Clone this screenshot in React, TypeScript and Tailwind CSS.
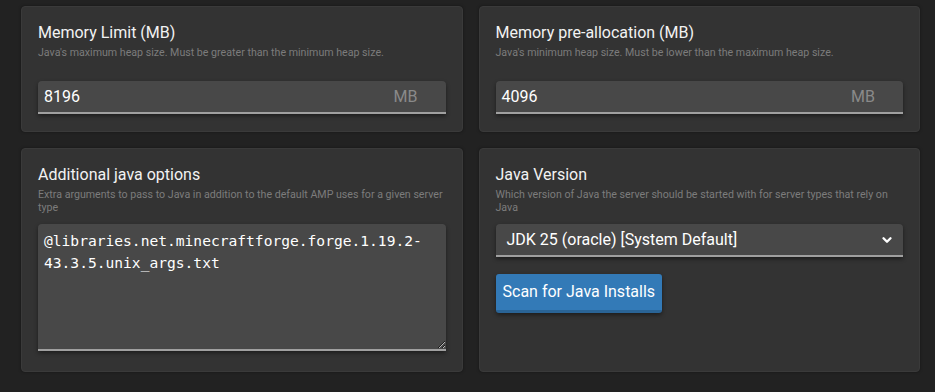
import { ChevronDown } from "lucide-react"

const Card = ({ title, desc, children }: { title: string; desc: string; children: React.ReactNode }) => {
  return (
    <div className="rounded bg-[#333333] border border-[#3a3a3a] px-4 pt-[15px] shadow-[0_0_3px_rgba(0,0,0,0.4)]">
      <h3 className="text-[16px] leading-[22px] text-[#f2f2f2] font-normal">{title}</h3>
      <p className="text-[10.65px] leading-[13px] text-[#7c7c7c] mt-[2px]">{desc}</p>
      {children}
    </div>
  )
}

export default function App() {
  return (
    <div className="w-[935px] h-[392px] bg-[#222222] pl-[21px] pr-[15px] pt-[6px] font-['Roboto',sans-serif] overflow-hidden">
      <div className="grid grid-cols-2 gap-x-4 gap-y-4">
        <Card title="Memory Limit (MB)" desc="Java's maximum heap size. Must be greater than the minimum heap size.">
          <div className="mt-[22px] mb-[17px] h-[33px] rounded-t bg-[#484848] border-b-2 border-[#a0a0a0] shadow-[0_2px_4px_rgba(0,0,0,0.45)] flex items-center justify-between pl-[6px] pr-[28px]">
            <span className="text-[16px] text-white">8196</span>
            <span className="text-[16px] text-[#8a8a8a]">MB</span>
          </div>
        </Card>
        <Card title="Memory pre-allocation (MB)" desc="Java's minimum heap size. Must be lower than the maximum heap size.">
          <div className="mt-[22px] mb-[17px] h-[33px] rounded-t bg-[#484848] border-b-2 border-[#a0a0a0] shadow-[0_2px_4px_rgba(0,0,0,0.45)] flex items-center justify-between pl-[6px] pr-[28px]">
            <span className="text-[16px] text-white">4096</span>
            <span className="text-[16px] text-[#8a8a8a]">MB</span>
          </div>
        </Card>
        <Card title="Additional java options" desc="Extra arguments to pass to Java in addition to the default AMP uses for a given server type">
          <textarea
            readOnly
            defaultValue="@libraries.net.minecraftforge.forge.1.19.2-43.3.5.unix_args.txt"
            className="mt-[10px] mb-[20px] block w-full h-[127px] rounded-t bg-[#484848] border-0 border-b-2 border-[#a0a0a0] shadow-[0_2px_4px_rgba(0,0,0,0.45)] px-[6px] pt-[6px] text-[14.6px] leading-[22px] text-white font-['DejaVu_Sans_Mono',monospace] outline-none resize-y"
          />
        </Card>
        <Card title="Java Version" desc="Which version of Java the server should be started with for server types that rely on Java">
          <div className="mt-[10px] h-[33px] rounded-t bg-[#484848] border-b-2 border-[#a0a0a0] shadow-[0_2px_4px_rgba(0,0,0,0.45)] flex items-center justify-between pl-[11px] pr-[9px]">
            <span className="text-[16px] text-white">JDK 25 (oracle) [System Default]</span>
            <ChevronDown size={14} strokeWidth={4} className="text-white" />
          </div>
          <button className="mt-[17px] h-[39px] px-[7px] rounded-[3px] bg-[#337ab7] border-b-[3px] border-[#2a6496] text-white text-[16px] shadow-[0_2px_4px_rgba(0,0,0,0.45)]">
            Scan for Java Installs
          </button>
        </Card>
      </div>
    </div>
  )
}
